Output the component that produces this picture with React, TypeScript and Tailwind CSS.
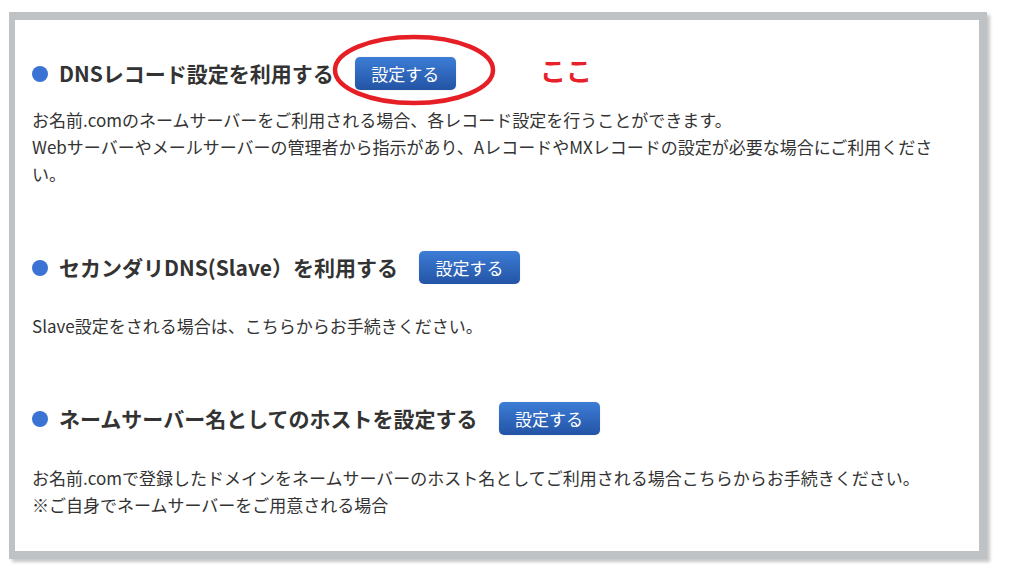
import type { ReactNode } from "react";

type SectionProps = {
  title: string;
  className?: string;
  bodyClassName?: string;
  children: ReactNode;
};

function SettingButton() {
  return (
    <button className="ml-[21px] h-[33px] w-[101px] rounded-[5px] bg-linear-to-b from-[#3d7dd6] to-[#2354a5] text-[17px] text-white shadow-[0_0_1px_rgba(0,0,0,0.3)]">
      設定する
    </button>
  );
}

function Section({ title, className, bodyClassName, children }: SectionProps) {
  return (
    <section className={className}>
      <div className="flex items-center">
        <span className="h-4 w-4 shrink-0 rounded-full bg-[#3a73d4]" />
        <h2 className="ml-[11px] text-[21px] font-bold leading-none text-[#333]">{title}</h2>
        <SettingButton />
      </div>
      <div className={`text-[17px] leading-[27px] text-[#333] ${bodyClassName ?? ""}`}>{children}</div>
    </section>
  );
}

export default function App() {
  return (
    <div className="min-h-[574px] bg-white pl-[9px] pt-[12px] font-['Noto_Sans_CJK_JP',sans-serif]">
      <div className="w-[978px] border-[#bfc2c5] border-t-8 border-l-[6px] border-r-8 border-b-8 shadow-[3px_3px_3px_rgba(0,0,0,0.22)]">
        <div className="relative bg-white pl-[17px] pr-[30px] pt-[37px] pb-[33px]">
          <Section title="DNSレコード設定を利用する" bodyClassName="mt-[16px]">
            お名前.comのネームサーバーをご利用される場合、各レコード設定を行うことができます。
            <br />
            Webサーバーやメールサーバーの管理者から指示があり、AレコードやMXレコードの設定が必要な場合にご利用ください。
          </Section>

          <Section title="セカンダリDNS(Slave）を利用する" className="mt-[64px]" bodyClassName="mt-[28px]">
            Slave設定をされる場合は、こちらからお手続きください。
          </Section>

          <Section title="ネームサーバー名としてのホストを設定する" className="mt-[63px]" bodyClassName="mt-[29px]">
            お名前.comで登録したドメインをネームサーバーのホスト名としてご利用される場合こちらからお手続きください。
            <br />
            ※ご自身でネームサーバーをご用意される場合
          </Section>

          {/* annotation */}
          <svg className="absolute left-[316px] top-[13px]" width="166" height="74" viewBox="0 0 166 74">
            <ellipse cx="83" cy="37" rx="79" ry="33" fill="none" stroke="#e61e25" strokeWidth="4.5" />
          </svg>
          <span className="absolute left-[525px] top-[37px] text-[26px] font-bold leading-none text-[#e8202a]">
            ここ
          </span>
        </div>
      </div>
    </div>
  );
}
